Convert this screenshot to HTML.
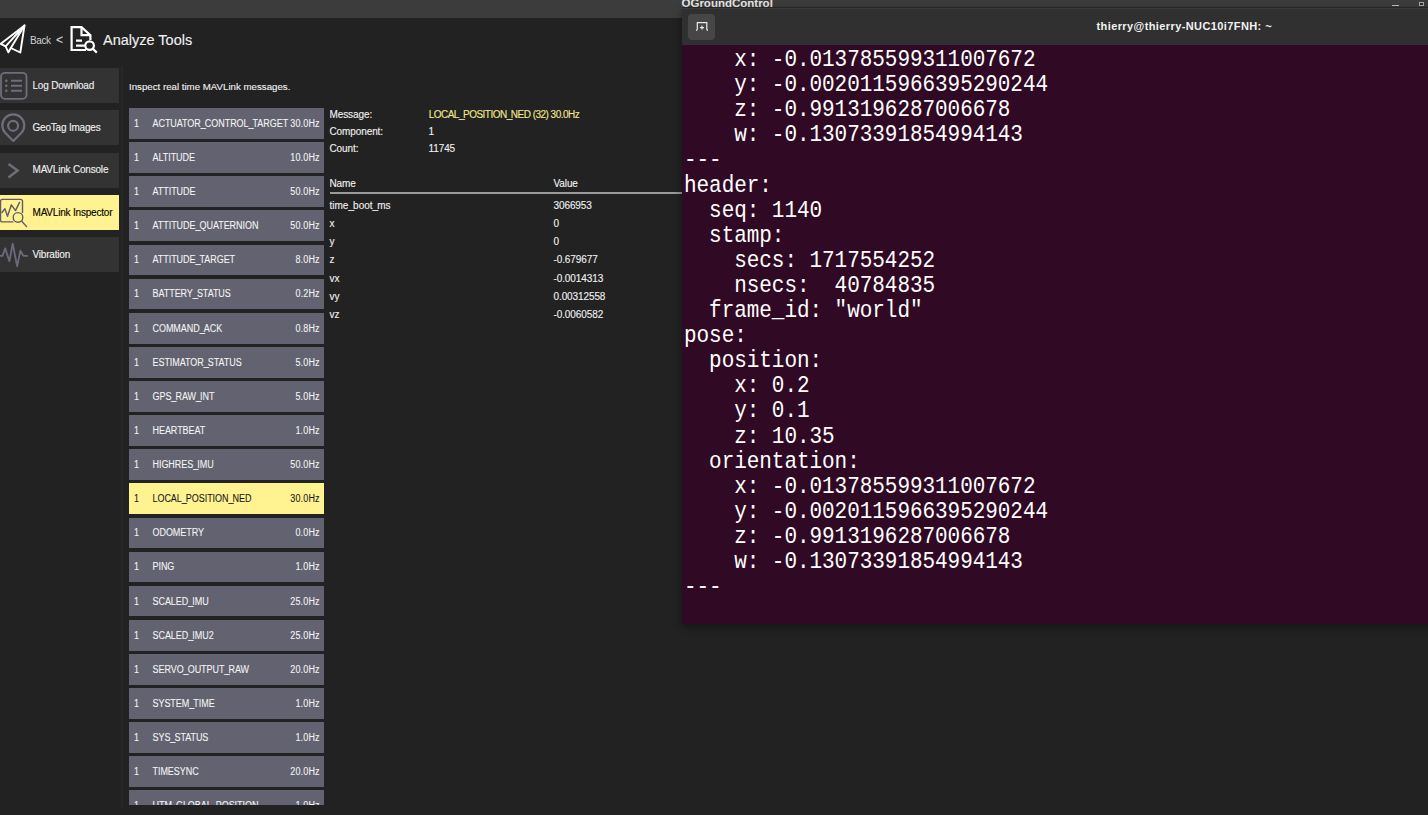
<!DOCTYPE html>
<html><head><meta charset="utf-8">
<style>
html,body{margin:0;padding:0;}
body{width:1428px;height:815px;overflow:hidden;position:relative;background:#222222;font-family:"Liberation Sans",sans-serif;color:#fff;}
.abs{position:absolute;}
.nb .t,.lbl,.fr,.txt{-webkit-text-stroke:0.12px currentColor;}
.mb{-webkit-text-stroke:0.08px currentColor;}
i{font-style:normal;margin-right:-0.9px;}
#topbar{position:absolute;left:0;top:0;width:1428px;height:18px;background:#3c3c3c;}
#qgctitle{position:absolute;left:681.5px;top:-3px;font:bold 11.5px "Liberation Sans",sans-serif;line-height:12px;color:#e6e6e6;white-space:pre;}
.txt{position:absolute;white-space:pre;line-height:1;}
#divider{position:absolute;left:121px;top:66px;width:2px;height:742px;background:#282828;}
.nb{position:absolute;left:0;width:119.3px;height:35.2px;background:#333333;}
.nb.sel{background:#fff291;}
.nb .t{position:absolute;left:32.5px;top:10.8px;font-size:10px;letter-spacing:-0.2px;color:#f0f0f0;white-space:pre;line-height:13px;}
.nb.sel .t{color:#000;}
.nb svg{position:absolute;left:0;top:0;}
#msglist{position:absolute;left:128.5px;top:108.1px;width:196px;height:696.5px;overflow:hidden;}
.mb{position:absolute;left:0;width:195.7px;height:30.7px;background:#626270;color:#f4f4f4;font-size:9px;line-height:30.7px;white-space:pre;}
.mb.sel{background:#fff291;color:#1a1a1a;}
.mb span{top:0.8px;transform:scaleY(1.16);transform-origin:0 17px;}
.mb .c{position:absolute;left:5.5px;}
.mb .n{position:absolute;left:24px;letter-spacing:-0.05px;}
.mb .r{position:absolute;right:4.5px;letter-spacing:0.15px;transform-origin:100% 17px;}
.lbl{position:absolute;font-size:10px;color:#f0f0f0;white-space:pre;line-height:12px;letter-spacing:-0.1px;}
.fr{position:absolute;left:0;height:14px;width:360px;font-size:10px;color:#f0f0f0;white-space:pre;line-height:12px;}
.fn{position:absolute;left:0;}
.fv{position:absolute;left:224px;letter-spacing:-0.1px;}
#term{position:absolute;left:682px;top:8px;width:760px;height:616px;background:#300a24;box-shadow:0 3px 9px rgba(0,0,0,0.4);}
#termhdr{position:absolute;left:0;top:0;width:100%;height:36.5px;background:#303030;}
#termbtn{position:absolute;left:6px;top:6px;width:27px;height:25.5px;background:#464646;border-radius:4px;}
#termtitle{position:absolute;left:414.5px;top:11.5px;font:bold 11px "Liberation Sans",sans-serif;letter-spacing:0.4px;color:#f2f2f2;white-space:pre;line-height:12px;}
#termtext{position:absolute;left:2px;top:40px;font-family:"Liberation Mono",monospace;font-size:21px;color:#ffffff;white-space:pre;}
.tl{position:absolute;left:0;line-height:25px;height:25px;letter-spacing:-0.05px;transform:scaleY(1.15);transform-origin:0 19px;}
</style></head><body>
<div id="topbar"></div>
<div id="qgctitle">QGroundControl</div>
<div class="abs" style="left:1392px;top:4.5px;width:7px;height:1.5px;background:#bdbdbd"></div>
<div class="abs" style="left:1419px;top:1.6px;width:3.2px;height:2.8px;border:1.1px solid #a8a8a8;background:#2a2a2a"></div>

<svg class="abs" style="left:0;top:0" width="100" height="60" viewBox="0 0 100 60">
  <g fill="none" stroke="#fff" stroke-width="1.9" stroke-linejoin="round" stroke-linecap="round">
    <path d="M24.5 25.5 L0.8 43.8 L5.6 46.3 L8.4 52.3 L10.8 48 L20.3 52.5 Z"/>
    <path d="M24.5 25.5 L5.6 46.3 M24.5 25.5 L10.8 48"/>
  </g>
  <g fill="none" stroke="#fff" stroke-width="2.2">
    <path d="M86 50 L71.6 50 L71.6 27.1 L81.5 27.1 L90.4 35.2 L90.4 40"/>
    <path d="M81.5 27.1 L81.5 35.2 L90.4 35.2"/>
    <path d="M76 40.7 L82 40.7 M76 45.6 L85 45.6"/>
    <circle cx="89.6" cy="45.6" r="4.3"/>
    <path d="M92.8 48.8 L96.8 52.6"/>
  </g>
</svg>
<div class="txt" style="left:30px;top:36px;font-size:10px;letter-spacing:-0.4px;color:#d0d0d0;-webkit-text-stroke:0;">Back</div>
<div class="txt" style="left:56px;top:34px;font-size:12px;color:#d8d8d8;">&lt;</div>
<div class="txt" style="left:103px;top:33px;font-size:14.5px;color:#f0f0f0;">Analyze Tools</div>

<div id="divider"></div>

<div class="nb" style="top:68px"><svg width="30" height="35" viewBox="0 0 30 35">
  <g fill="none" stroke="#6e6e7c" stroke-width="1.8"><rect x="1" y="4.8" width="25.5" height="26" rx="4"/>
  <path d="M11 12.7 H22 M11 17.8 H22 M11 22.8 H22" stroke-width="2"/></g>
  <g fill="#6e6e7c"><circle cx="6.3" cy="12.7" r="1.3"/><circle cx="6.3" cy="17.8" r="1.3"/><circle cx="6.3" cy="22.8" r="1.3"/></g>
</svg><span class="t">Log Download</span></div>
<div class="nb" style="top:110.3px"><svg width="30" height="35" viewBox="0 0 30 35">
  <g fill="none" stroke="#6e6e7c" stroke-width="2.2"><path d="M13.3 31 L5.2 22.8 A11 11 0 1 1 21.4 22.8 Z" stroke-linejoin="round"/>
  <circle cx="13.1" cy="15.8" r="5"/></g>
</svg><span class="t">GeoTag Images</span></div>
<div class="nb" style="top:152.6px"><svg width="30" height="35" viewBox="0 0 30 35">
  <g fill="none" stroke="#6e6e7c" stroke-width="2.5"><path d="M8.5 11 L17.6 17.5 L8.5 24.5"/></g>
</svg><span class="t">MAVLink Console</span></div>
<div class="nb sel" style="top:194.9px"><svg width="30" height="35" viewBox="0 0 30 35">
  <g fill="none" stroke="#5e5c6c" stroke-width="1.4" stroke-linejoin="round" stroke-linecap="round"><path d="M12.9 26.9 H2.5 Q0.5 26.9 0.5 24.9 V6.4 Q0.5 4.4 2.5 4.4 H20.5 Q22.5 4.4 22.5 6.4 V17.5"/>
  <path d="M1.9 17.5 L4.9 13.8 L7.5 21.3 L11.4 9.8 L15.5 15.6 L19.5 7.4"/>
  <circle cx="18" cy="22.4" r="4.8"/><path d="M21.5 26 L26.6 31.6"/></g>
</svg><span class="t">MAVLink Inspector</span></div>
<div class="nb" style="top:237.2px"><svg width="30" height="35" viewBox="0 0 30 35">
  <g fill="none" stroke="#6c6a7c" stroke-width="1.8" stroke-linejoin="round" stroke-linecap="round"><path d="M0 18.9 L2.5 18.9 L5.2 11.4 L9.4 24.2 L12.7 6.6 L17.1 29.2 L20.4 13.7 L23.4 18.9 L27.1 18.9"/></g>
</svg><span class="t">Vibration</span></div>

<div class="txt" style="left:129px;top:81.5px;font-size:9.7px;color:#f0f0f0;">Inspect real time MAVLink messages.</div>

<div id="msglist">
<div class="mb" style="top:0.00px"><span class="c">1</span><span class="n">ACTUATOR<i>_</i>CONTROL<i>_</i>TARGET</span><span class="r">30.0Hz</span></div>
<div class="mb" style="top:34.12px"><span class="c">1</span><span class="n">ALTITUDE</span><span class="r">10.0Hz</span></div>
<div class="mb" style="top:68.24px"><span class="c">1</span><span class="n">ATTITUDE</span><span class="r">50.0Hz</span></div>
<div class="mb" style="top:102.36px"><span class="c">1</span><span class="n">ATTITUDE<i>_</i>QUATERNION</span><span class="r">50.0Hz</span></div>
<div class="mb" style="top:136.48px"><span class="c">1</span><span class="n">ATTITUDE<i>_</i>TARGET</span><span class="r">8.0Hz</span></div>
<div class="mb" style="top:170.60px"><span class="c">1</span><span class="n">BATTERY<i>_</i>STATUS</span><span class="r">0.2Hz</span></div>
<div class="mb" style="top:204.72px"><span class="c">1</span><span class="n">COMMAND<i>_</i>ACK</span><span class="r">0.8Hz</span></div>
<div class="mb" style="top:238.84px"><span class="c">1</span><span class="n">ESTIMATOR<i>_</i>STATUS</span><span class="r">5.0Hz</span></div>
<div class="mb" style="top:272.96px"><span class="c">1</span><span class="n">GPS<i>_</i>RAW<i>_</i>INT</span><span class="r">5.0Hz</span></div>
<div class="mb" style="top:307.08px"><span class="c">1</span><span class="n">HEARTBEAT</span><span class="r">1.0Hz</span></div>
<div class="mb" style="top:341.20px"><span class="c">1</span><span class="n">HIGHRES<i>_</i>IMU</span><span class="r">50.0Hz</span></div>
<div class="mb sel" style="top:375.32px"><span class="c">1</span><span class="n">LOCAL<i>_</i>POSITION<i>_</i>NED</span><span class="r">30.0Hz</span></div>
<div class="mb" style="top:409.44px"><span class="c">1</span><span class="n">ODOMETRY</span><span class="r">0.0Hz</span></div>
<div class="mb" style="top:443.56px"><span class="c">1</span><span class="n">PING</span><span class="r">1.0Hz</span></div>
<div class="mb" style="top:477.68px"><span class="c">1</span><span class="n">SCALED<i>_</i>IMU</span><span class="r">25.0Hz</span></div>
<div class="mb" style="top:511.80px"><span class="c">1</span><span class="n">SCALED<i>_</i>IMU2</span><span class="r">25.0Hz</span></div>
<div class="mb" style="top:545.92px"><span class="c">1</span><span class="n">SERVO<i>_</i>OUTPUT<i>_</i>RAW</span><span class="r">20.0Hz</span></div>
<div class="mb" style="top:580.04px"><span class="c">1</span><span class="n">SYSTEM<i>_</i>TIME</span><span class="r">1.0Hz</span></div>
<div class="mb" style="top:614.16px"><span class="c">1</span><span class="n">SYS<i>_</i>STATUS</span><span class="r">1.0Hz</span></div>
<div class="mb" style="top:648.28px"><span class="c">1</span><span class="n">TIMESYNC</span><span class="r">20.0Hz</span></div>
<div class="mb" style="top:682.40px"><span class="c">1</span><span class="n">UTM<i>_</i>GLOBAL<i>_</i>POSITION</span><span class="r">1.0Hz</span></div>
</div>

<div class="lbl" style="left:329.5px;top:109.3px">Message:</div>
<div class="lbl" style="left:329.5px;top:126px">Component:</div>
<div class="lbl" style="left:329.5px;top:143px">Count:</div>
<div class="lbl" style="left:428.7px;top:109.3px;color:#f2e88e;letter-spacing:-0.52px">LOCAL<i>_</i>POSITION<i>_</i>NED (32) 30.0Hz</div>
<div class="lbl" style="left:428.5px;top:126px">1</div>
<div class="lbl" style="left:428.5px;top:143px">11745</div>
<div class="lbl" style="left:329.5px;top:177.8px">Name</div>
<div class="lbl" style="left:553.5px;top:177.8px">Value</div>
<div class="abs" style="left:329.5px;top:192px;width:360px;height:2px;background:#9a9a9a"></div>
<div class="abs" style="left:329.5px;top:199.5px">
<div class="fr" style="top:0.00px"><span class="fn">time<i>_</i>boot<i>_</i>ms</span><span class="fv">3066953</span></div>
<div class="fr" style="top:18.30px"><span class="fn">x</span><span class="fv">0</span></div>
<div class="fr" style="top:36.60px"><span class="fn">y</span><span class="fv">0</span></div>
<div class="fr" style="top:54.90px"><span class="fn">z</span><span class="fv">-0.679677</span></div>
<div class="fr" style="top:73.20px"><span class="fn">vx</span><span class="fv">-0.0014313</span></div>
<div class="fr" style="top:91.50px"><span class="fn">vy</span><span class="fv">0.00312558</span></div>
<div class="fr" style="top:109.80px"><span class="fn">vz</span><span class="fv">-0.0060582</span></div>
</div>

<div class="abs" style="left:682px;top:7px;width:746px;height:1px;background:#2a2a2a"></div>
<div id="term">
  <div id="termhdr"><div class="abs" style="left:0;top:0;width:100%;height:1px;background:#3a3a3a"></div>
    <div id="termbtn"></div>
    <svg class="abs" style="left:11px;top:11px" width="20" height="18" viewBox="0 0 20 18">
      <g fill="none" stroke="#e8e8e8" stroke-width="1.2"><path d="M3 11.4 Q4.3 11.4 4.3 10 V3.7 H13.8 V10 Q13.8 11.4 15 11.4"/><path d="M7 8.6 H11 M9 6.6 V10.6"/></g>
    </svg>
    <div id="termtitle">thierry@thierry-NUC10i7FNH: ~</div>
  </div>
<div id="termtext">
<div class="tl" style="top:0.00px">    x: -0.013785599311007672</div>
<div class="tl" style="top:25.10px">    y: -0.0020115966395290244</div>
<div class="tl" style="top:50.20px">    z: -0.9913196287006678</div>
<div class="tl" style="top:75.30px">    w: -0.13073391854994143</div>
<div class="tl" style="top:100.40px">---</div>
<div class="tl" style="top:125.50px">header:</div>
<div class="tl" style="top:150.60px">  seq: 1140</div>
<div class="tl" style="top:175.70px">  stamp:</div>
<div class="tl" style="top:200.80px">    secs: 1717554252</div>
<div class="tl" style="top:225.90px">    nsecs:  40784835</div>
<div class="tl" style="top:251.00px">  frame_id: &quot;world&quot;</div>
<div class="tl" style="top:276.10px">pose:</div>
<div class="tl" style="top:301.20px">  position:</div>
<div class="tl" style="top:326.30px">    x: 0.2</div>
<div class="tl" style="top:351.40px">    y: 0.1</div>
<div class="tl" style="top:376.50px">    z: 10.35</div>
<div class="tl" style="top:401.60px">  orientation:</div>
<div class="tl" style="top:426.70px">    x: -0.013785599311007672</div>
<div class="tl" style="top:451.80px">    y: -0.0020115966395290244</div>
<div class="tl" style="top:476.90px">    z: -0.9913196287006678</div>
<div class="tl" style="top:502.00px">    w: -0.13073391854994143</div>
<div class="tl" style="top:527.10px">---</div>
</div>
</div>
</body></html>
